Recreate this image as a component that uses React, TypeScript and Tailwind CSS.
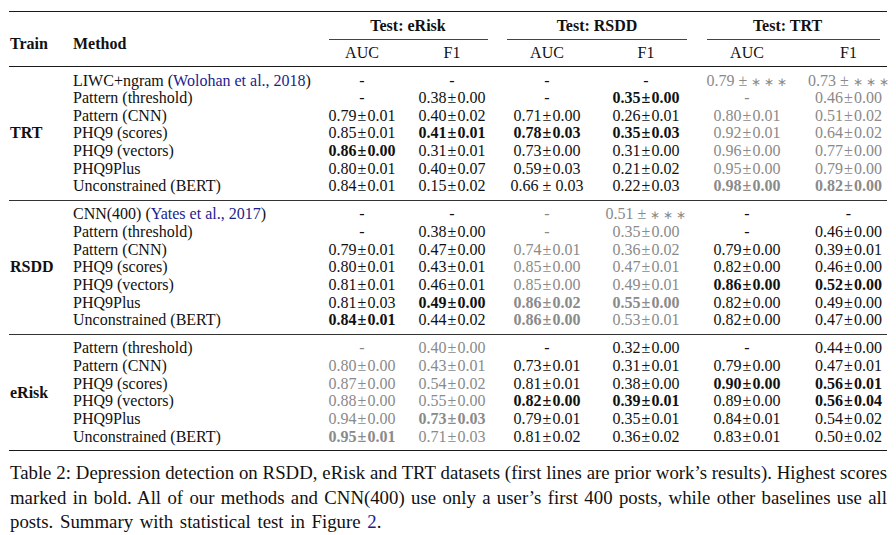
import React from 'react';

type Row = { method: React.ReactNode; cells: string[] };

const Cite = ({ children }: { children: React.ReactNode }) => (
  <span className="text-[#1c1c8f]">{children}</span>
);

const trtRows: Row[] = [
  {
    method: <>LIWC+ngram (<Cite>Wolohan et al., 2018</Cite>)</>,
    cells: ['-', '-', '-', '-', '~0.79 ± ∗∗∗', '~0.73 ± ∗∗∗'],
  },
  { method: 'Pattern (threshold)', cells: ['-', '0.38±0.00', '-', '*0.35±0.00', '~-', '~0.46±0.00'] },
  { method: 'Pattern (CNN)', cells: ['0.79±0.01', '0.40±0.02', '0.71±0.00', '0.26±0.01', '~0.80±0.01', '~0.51±0.02'] },
  { method: 'PHQ9 (scores)', cells: ['0.85±0.01', '*0.41±0.01', '*0.78±0.03', '*0.35±0.03', '~0.92±0.01', '~0.64±0.02'] },
  { method: 'PHQ9 (vectors)', cells: ['*0.86±0.00', '0.31±0.01', '0.73±0.00', '0.31±0.00', '~0.96±0.00', '~0.77±0.00'] },
  { method: 'PHQ9Plus', cells: ['0.80±0.01', '0.40±0.07', '0.59±0.03', '0.21±0.02', '~0.95±0.00', '~0.79±0.00'] },
  { method: 'Unconstrained (BERT)', cells: ['0.84±0.01', '0.15±0.02', '0.66 ± 0.03', '0.22±0.03', '~*0.98±0.00', '~*0.82±0.00'] },
];

const rsddRows: Row[] = [
  {
    method: <>CNN(400) (<Cite>Yates et al., 2017</Cite>)</>,
    cells: ['-', '-', '~-', '~0.51 ± ∗∗∗', '-', '-'],
  },
  { method: 'Pattern (threshold)', cells: ['-', '0.38±0.00', '~-', '~0.35±0.00', '-', '0.46±0.00'] },
  { method: 'Pattern (CNN)', cells: ['0.79±0.01', '0.47±0.00', '~0.74±0.01', '~0.36±0.02', '0.79±0.00', '0.39±0.01'] },
  { method: 'PHQ9 (scores)', cells: ['0.80±0.01', '0.43±0.01', '~0.85±0.00', '~0.47±0.01', '0.82±0.00', '0.46±0.00'] },
  { method: 'PHQ9 (vectors)', cells: ['0.81±0.01', '0.46±0.01', '~0.85±0.00', '~0.49±0.01', '*0.86±0.00', '*0.52±0.00'] },
  { method: 'PHQ9Plus', cells: ['0.81±0.03', '*0.49±0.00', '~*0.86±0.02', '~*0.55±0.00', '0.82±0.00', '0.49±0.00'] },
  { method: 'Unconstrained (BERT)', cells: ['*0.84±0.01', '0.44±0.02', '~*0.86±0.00', '~0.53±0.01', '0.82±0.00', '0.47±0.00'] },
];

const eriskRows: Row[] = [
  { method: 'Pattern (threshold)', cells: ['~-', '~0.40±0.00', '-', '0.32±0.00', '-', '0.44±0.00'] },
  { method: 'Pattern (CNN)', cells: ['~0.80±0.00', '~0.43±0.01', '0.73±0.01', '0.31±0.01', '0.79±0.00', '0.47±0.01'] },
  { method: 'PHQ9 (scores)', cells: ['~0.87±0.00', '~0.54±0.02', '0.81±0.01', '0.38±0.00', '*0.90±0.00', '*0.56±0.01'] },
  { method: 'PHQ9 (vectors)', cells: ['~0.88±0.00', '~0.55±0.00', '*0.82±0.00', '*0.39±0.01', '0.89±0.00', '*0.56±0.04'] },
  { method: 'PHQ9Plus', cells: ['~0.94±0.00', '~*0.73±0.03', '0.79±0.01', '0.35±0.01', '0.84±0.01', '0.54±0.02'] },
  { method: 'Unconstrained (BERT)', cells: ['~*0.95±0.01', '~0.71±0.03', '0.81±0.02', '0.36±0.02', '0.83±0.01', '0.50±0.02'] },
];

const grid = 'grid grid-cols-[64px_245px_88px_92px_98px_100px_102px_91px]';

// "0.79 ± ∗∗∗" style entries: prior work without a reported deviation
function Stars() {
  return (
    <span className="ml-[4px] mr-[-3px] inline-block text-[12px] leading-none tracking-[3px]">
      ∗∗∗
    </span>
  );
}

function Cell({ value, index }: { value: string; index: number }) {
  let v = value;
  const gray = v.startsWith('~');
  if (gray) v = v.slice(1);
  const bold = v.startsWith('*');
  if (bold) v = v.slice(1);
  let content: React.ReactNode = v;
  if (v.endsWith('∗∗∗')) {
    content = (
      <>
        {v.replace(' ∗∗∗', '')}
        <Stars />
      </>
    );
  } else if (!v.includes(' ') && v.includes('±')) {
    const [a, b] = v.split('±');
    content = (
      <>
        {a}
        <span className="mx-px">±</span>
        {b}
      </>
    );
  }
  return (
    <div
      className={`h-[17.67px] text-center whitespace-nowrap ${index === 5 ? 'pl-[10px]' : ''} ${
        gray ? 'text-[#8a8a8a]' : ''
      } ${bold ? 'font-bold' : ''}`}
    >
      {content}
    </div>
  );
}

function Block({ label, rows, last }: { label: string; rows: Row[]; last?: boolean }) {
  return (
    <div
      className={`${grid} py-[4.7px] ${
        last ? 'border-b-[1.5px] border-[#1a1a1a]' : 'border-b border-[#333]'
      }`}
    >
      <div
        className={`${rows.length === 7 ? 'row-span-7' : 'row-span-6'} flex items-center pl-px font-bold`}
      >
        {label}
      </div>
      {rows.map((r, i) => (
        <React.Fragment key={i}>
          <div className="h-[17.67px] whitespace-nowrap">{r.method}</div>
          {r.cells.map((c, j) => (
            <Cell key={j} value={c} index={j} />
          ))}
        </React.Fragment>
      ))}
    </div>
  );
}

function Header() {
  const groups = [
    { name: 'Test: eRisk', text: '', rule: 'ml-[11px] mr-[10px]' },
    { name: 'Test: RSDD', text: '', rule: 'ml-[9px] mr-[9px]' },
    { name: 'Test: TRT', text: 'pr-[10px]', rule: 'ml-[11px] mr-[9px]' },
  ];
  return (
    <div className={`${grid} border-t-[1.5px] border-b border-[#1a1a1a] font-bold`}>
      <div className="row-span-2 flex items-center pl-px pt-[10px]">Train</div>
      <div className="row-span-2 flex items-center pt-[10px]">Method</div>
      {groups.map((g) => (
        <div key={g.name} className="col-span-2 pt-[4.6px]">
          <div className={`text-center ${g.text}`}>{g.name}</div>
          <div className={`mt-[4.6px] border-t border-[#444] ${g.rule}`} />
        </div>
      ))}
      {['AUC', 'F1', 'AUC', 'F1', 'AUC', 'F1'].map((h, i) => (
        <div
          key={i}
          className={`pt-[4px] pb-[4.3px] text-center font-normal ${i === 5 ? 'pl-[10px]' : ''}`}
        >
          {h}
        </div>
      ))}
    </div>
  );
}

export default function App() {
  return (
    <div className="w-[896px] h-[535px] bg-white px-[9px] pt-[11px] font-['Liberation_Serif','Times_New_Roman',serif] text-[16px] leading-[17.67px] text-[#111]">
      <Header />
      <Block label="TRT" rows={trtRows} />
      <Block label="RSDD" rows={rsddRows} />
      <Block label="eRisk" rows={eriskRows} last />
      <div className="mt-[10px] pl-px text-[18.8px] leading-[24.5px]">
        <div className="text-justify [text-align-last:justify] [word-spacing:-1.5px]">
          Table 2: Depression detection on RSDD, eRisk and TRT datasets (first lines are prior work’s
          results). Highest scores
        </div>
        <div className="text-justify [text-align-last:justify] [word-spacing:-1.5px]">
          marked in bold. All of our methods and CNN(400) use only a user’s first 400 posts, while
          other baselines use all
        </div>
        <div className="[word-spacing:2px]">
          posts. Summary with statistical test in Figure <span className="text-[#1c1c8f]">2</span>.
        </div>
      </div>
    </div>
  );
}
